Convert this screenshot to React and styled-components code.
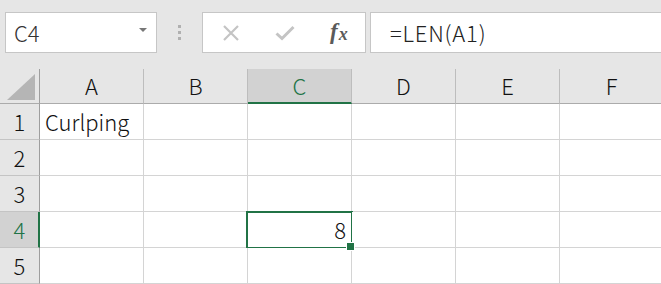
import styled, { createGlobalStyle } from "styled-components";

// excel-ish formula bar + grid, selection on C4
const GlobalStyle = createGlobalStyle`
  html, body { margin: 0; padding: 0; background: #fff; }
  body { font-family: "Noto Sans CJK JP", "Noto Sans", sans-serif; font-weight: 300; overflow: hidden; }
`;

const COLS = ["A", "B", "C", "D", "E", "F"];
const ROWS = [1, 2, 3, 4, 5];

const cells = {
  A1: { value: "Curlping" },
  C4: { value: "8", align: "right" },
};

const selected = { col: "C", row: 4 };

function App() {
  return (
    <Sheet>
      <GlobalStyle />
      <FormulaBar>
        <NameBox>
          <span>C4</span>
          <Caret />
        </NameBox>
        <Grip>
          <i />
          <i />
          <i />
        </Grip>
        <ButtonBox>
          <IconButton>
            <svg width="18" height="16" viewBox="0 0 18 16">
              <path d="M2 1 L16 15 M16 1 L2 15" stroke="#c4c4c4" strokeWidth="2.2" fill="none" />
            </svg>
          </IconButton>
          <IconButton>
            <svg width="20" height="16" viewBox="0 0 20 16">
              <path d="M1.5 8.5 L7 13.5 L18.5 2" stroke="#c4c4c4" strokeWidth="3" fill="none" />
            </svg>
          </IconButton>
          <Fx>
            f<sub>x</sub>
          </Fx>
        </ButtonBox>
        <FormulaInput>=LEN(A1)</FormulaInput>
      </FormulaBar>

      <Grid>
        <Corner>
          <svg width="28" height="26" viewBox="0 0 28 26">
            <polygon points="28,0 28,26 0,26" fill="#b5b5b5" />
          </svg>
        </Corner>
        {COLS.map((c) => (
          <ColHeader key={c} $active={c === selected.col}>
            {c}
          </ColHeader>
        ))}
        {ROWS.map((r) => (
          <Row key={r}>
            <RowHeader $active={r === selected.row}>{r}</RowHeader>
            {COLS.map((c) => {
              const cell = cells[c + r];
              const isSel = c === selected.col && r === selected.row;
              return (
                <Cell key={c} $align={cell?.align} $selected={isSel}>
                  {cell?.value}
                </Cell>
              );
            })}
          </Row>
        ))}
      </Grid>
    </Sheet>
  );
}

export default App;

const Sheet = styled.div`
  width: 661px;
  height: 284px;
  overflow: hidden;
  background: #e6e6e6;
`;

const FormulaBar = styled.div`
  height: 69px;
  box-sizing: border-box;
  padding: 12px 0 0 5px;
  display: flex;
  align-items: flex-start;
  background: #e6e6e6;
`;

const Box = styled.div`
  height: 41px;
  box-sizing: border-box;
  border: 1px solid #c6c6c6;
  background: #fff;
  display: flex;
  align-items: center;
`;

const NameBox = styled(Box)`
  width: 152px;
  padding: 0 8px 0 8px;
  justify-content: space-between;
  font-size: 22px;
  color: #333;
  span {
    line-height: 1;
    margin-top: -2px;
  }
`;

const Caret = styled.div`
  width: 0;
  height: 0;
  border-left: 4px solid transparent;
  border-right: 4px solid transparent;
  border-top: 4px solid #777;
  margin-right: 1px;
  margin-bottom: 6px;
`;

const Grip = styled.div`
  width: 45px;
  height: 41px;
  display: flex;
  flex-direction: column;
  align-items: center;
  justify-content: center;
  gap: 3px;
  i {
    display: block;
    width: 3px;
    height: 3px;
    background: #b0b0b0;
  }
`;

const ButtonBox = styled(Box)`
  width: 164px;
  padding: 0 0 0 19px;
  gap: 0;
`;

const IconButton = styled.div`
  width: 53px;
  display: flex;
  align-items: center;
  height: 100%;
  padding-top: 1px;
`;

const Fx = styled.div`
  font-family: "Liberation Serif", "DejaVu Serif", serif;
  font-style: italic;
  font-weight: bold;
  font-size: 23px;
  color: #5a5a5a;
  line-height: 1;
  margin-left: 2px;
  margin-top: -2px;
  sub {
    font-size: 18px;
    vertical-align: -1px;
    margin-left: 1px;
  }
`;

const FormulaInput = styled(Box)`
  flex: 1;
  margin-left: 4px;
  padding: 0 0 2px 19px;
  border-right: none;
  font-size: 22px;
  letter-spacing: 0.8px;
  color: #222;
  line-height: 1;
`;

const Grid = styled.div`
  display: grid;
  grid-template-columns: 40px repeat(6, 104px);
  grid-auto-rows: 36px;
  grid-template-rows: 35px;
`;

const Row = styled.div`
  display: contents;
`;

const HeaderBase = styled.div`
  box-sizing: border-box;
  background: #e6e6e6;
  display: flex;
  align-items: center;
  justify-content: center;
  font-size: 22px;
  line-height: 1;
  padding-bottom: 2px;
`;

const Corner = styled(HeaderBase)`
  border-right: 1px solid #9e9e9e;
  border-bottom: 1px solid #ababab;
  align-items: flex-end;
  justify-content: flex-end;
  padding: 0 4px 3px 0;
`;

const ColHeader = styled(HeaderBase)`
  border-right: 1px solid #bdbdbd;
  border-bottom: ${(p) => (p.$active ? "2px solid #217346" : "1px solid #ababab")};
  background: ${(p) => (p.$active ? "#d2d2d2" : "#e6e6e6")};
  color: ${(p) => (p.$active ? "#217346" : "#111")};
  padding-top: ${(p) => (p.$active ? "1px" : "0")};
`;

const RowHeader = styled(HeaderBase)`
  border-bottom: 1px solid #c4c4c4;
  border-right: ${(p) => (p.$active ? "2px solid #217346" : "1px solid #9e9e9e")};
  background: ${(p) => (p.$active ? "#d2d2d2" : "#e6e6e6")};
  color: ${(p) => (p.$active ? "#217346" : "#111")};
  padding-left: ${(p) => (p.$active ? "1px" : "0")};
`;

const Cell = styled.div`
  position: relative;
  box-sizing: border-box;
  background: #fff;
  border-right: 1px solid #d4d4d4;
  border-bottom: 1px solid #d4d4d4;
  display: flex;
  align-items: center;
  justify-content: ${(p) => (p.$align === "right" ? "flex-end" : "flex-start")};
  padding: 0 5px 2px 5px;
  font-size: 22px;
  color: #111;
  line-height: 1;
  white-space: nowrap;

  ${(p) =>
    p.$selected &&
    `
    &::after {
      content: "";
      position: absolute;
      left: -2px;
      top: -1px;
      right: -2px;
      bottom: -2px;
      border: 2px solid #217346;
      pointer-events: none;
    }
    &::before {
      content: "";
      position: absolute;
      right: -4px;
      bottom: -4px;
      width: 7px;
      height: 7px;
      background: #217346;
      border: 1px solid #fff;
      z-index: 2;
    }
  `}
`;
